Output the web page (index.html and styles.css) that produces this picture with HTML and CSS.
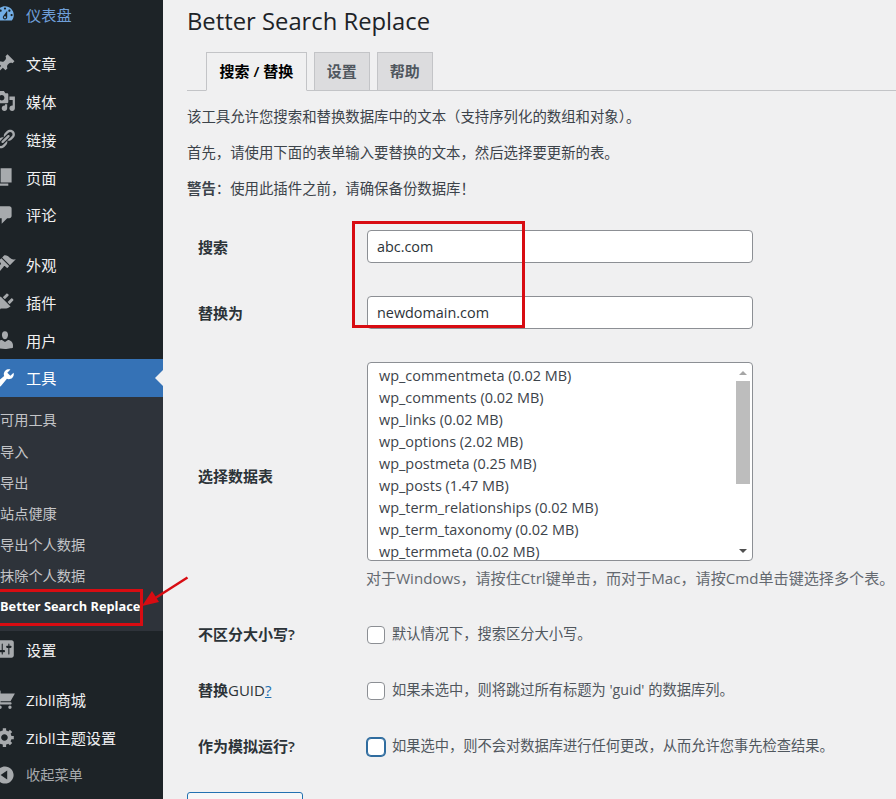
FILE: index.html
```html
<!DOCTYPE html>
<html lang="zh-CN">
<head>
<meta charset="utf-8">
<title>Better Search Replace</title>
<link rel="stylesheet" href="styles.css">
</head>
<body>
<div class="page">
  <nav class="sidebar">
    <ul class="menu">
      <li class="mi dash"><svg class="ic" viewBox="0 0 20 20"><path d="M3.76 16h12.48c1.1-1.37 1.76-3.11 1.76-5 0-4.42-3.58-8-8-8s-8 3.58-8 8c0 1.89.66 3.63 1.76 5zM10 4c.55 0 1 .45 1 1s-.45 1-1 1-1-.45-1-1 .45-1 1-1zM6 6c.55 0 1 .45 1 1s-.45 1-1 1-1-.45-1-1 .45-1 1-1zm8 0c.55 0 1 .45 1 1s-.45 1-1 1-1-.45-1-1 .45-1 1-1zm-5.37 5.55L12 7v6c0 1.1-.9 2-2 2s-2-.9-2-2c0-.57.24-1.08.63-1.45zM4 10c.55 0 1 .45 1 1s-.45 1-1 1-1-.45-1-1 .45-1 1-1zm12 0c.55 0 1 .45 1 1s-.45 1-1 1-1-.45-1-1 .45-1 1-1zm-5 3c0-.55-.45-1-1-1s-1 .45-1 1 .45 1 1 1 1-.45 1-1z"/></svg>仪表盘</li>
      <li class="mi sep"><svg class="ic" viewBox="0 0 20 20"><path d="M10.44 3.02l1.82-1.82 6.36 6.35-1.83 1.82c-1.05-.68-2.48-.57-3.41.36l-.75.75c-.92.93-1.04 2.35-.35 3.41l-1.83 1.82-2.41-2.41-2.8 2.79c-.42.42-3.38 2.71-3.8 2.29s1.86-3.39 2.28-3.81l2.79-2.79L4.1 9.36l1.83-1.82c1.05.69 2.48.57 3.4-.36l.75-.75c.93-.92 1.05-2.35.36-3.41z"/></svg>文章</li>
      <li class="mi"><svg class="ic" viewBox="0 0 20 20"><path d="M13 11V4c0-.55-.45-1-1-1h-1.67L9 1H5L3.67 3H2c-.55 0-1 .45-1 1v7c0 .55.45 1 1 1h10c.55 0 1-.45 1-1zM7 4.5c1.38 0 2.5 1.12 2.5 2.5S8.38 9.5 7 9.5 4.5 8.38 4.5 7 5.62 4.5 7 4.5zM14 6h5v10.5c0 1.38-1.12 2.5-2.5 2.5S14 17.88 14 16.5s1.12-2.5 2.5-2.5c.17 0 .34.02.5.05V9h-3V6zm-4 8.05V13h2v3.5c0 1.38-1.12 2.5-2.5 2.5S7 17.88 7 16.5 8.12 14 9.5 14c.17 0 .34.02.5.05z"/></svg>媒体</li>
      <li class="mi"><svg class="ic" viewBox="0 0 20 20"><path d="M17.74 2.76c1.68 1.69 1.68 4.41 0 6.1l-1.53 1.52c-1.12 1.12-2.7 1.47-4.14 1.09l2.62-2.61.76-.77.76-.76c.84-.84.84-2.2 0-3.04-.84-.85-2.2-.85-3.04 0l-.77.76-3.38 3.38c-.37-1.44-.02-3.02 1.1-4.14l1.52-1.53c1.69-1.68 4.42-1.68 6.1 0zM8.59 13.43l5.34-5.34c.42-.42.42-1.1 0-1.52-.44-.43-1.13-.39-1.53 0l-5.33 5.34c-.42.42-.42 1.1 0 1.52.44.43 1.13.39 1.52 0zm-.76 2.29l4.14-4.15c.38 1.44.03 3.02-1.09 4.14l-1.52 1.53c-1.69 1.68-4.41 1.68-6.1 0-1.68-1.68-1.68-4.42 0-6.1l1.53-1.52c1.12-1.12 2.7-1.47 4.14-1.1l-4.14 4.15c-.85.84-.85 2.2 0 3.05.84.84 2.2.84 3.04 0z"/></svg>链接</li>
      <li class="mi"><svg class="ic" viewBox="0 0 20 20"><path d="M6 15V2h10v13H6zm-1 1h8v2H3V5h2v11z"/></svg>页面</li>
      <li class="mi"><svg class="ic" viewBox="0 0 20 20"><path d="M5 2h9c1.1 0 2 .9 2 2v7c0 1.1-.9 2-2 2h-2l-5 5v-5H5c-1.1 0-2-.9-2-2V4c0-1.1.9-2 2-2z"/></svg>评论</li>
      <li class="mi sep"><svg class="ic" viewBox="0 0 20 20"><path d="M14.48 11.06L7.41 3.99l1.5-1.5c.5-.56 2.3-.47 3.51.32 1.21.8 1.43 1.28 2.91 2.1 1.18.64 2.45 1.26 4.45.85zm-.71.71L6.7 4.7 4.93 6.47c-.39.39-.39 1.02 0 1.41l1.06 1.06c.39.39.39 1.03 0 1.42-.6.6-1.43 1.11-2.21 1.69-.35.26-.7.53-1.01.84C1.43 13.23.77 15.04 2 16.2s2.97.53 4.31-.8c.3-.31.58-.66.85-1.01.58-.78 1.08-1.61 1.69-2.21.39-.39 1.02-.39 1.41 0l1.06 1.06c.39.39 1.02.39 1.41 0z"/></svg>外观</li>
      <li class="mi"><svg class="ic" viewBox="0 0 20 20"><path d="M13.11 4.36L9.87 7.6 8 5.73l3.24-3.24c.35-.34 1.05-.2 1.56.32.52.51.66 1.21.31 1.55zm-8 1.77l.91-1.12 9.01 9.01-1.19.84c-.71.71-2.63 1.16-3.82 1.16H6.14L4.9 17.26c-.59.59-1.54.59-2.12 0-.59-.58-.59-1.53 0-2.12l1.24-1.24v-3.88c0-1.13.4-3.19 1.09-3.89zm7.26 3.97l3.24-3.24c.34-.35 1.04-.21 1.55.31.52.51.66 1.21.31 1.55l-3.24 3.25z"/></svg>插件</li>
      <li class="mi"><svg class="ic" viewBox="0 0 20 20"><path d="M10 9.25c-2.27 0-2.73-3.44-2.73-3.44C7 4.02 7.82 2 9.97 2c2.16 0 2.98 2.02 2.71 3.81 0 0-.41 3.44-2.68 3.44zm0 2.57L12.720 10c2.390 0 4.520 2.330 4.520 4.530v2.490s-3.650 1.130-7.240 1.130c-3.650 0-7.240-1.130-7.240-1.130v-2.490c0-2.250 1.940-4.480 4.470-4.480z"/></svg>用户</li>
      <li class="mi active"><svg class="ic" viewBox="0 0 20 20"><path d="M16.68 9.77c-1.34 1.34-3.3 1.67-4.95.99l-5.41 6.52c-.99.99-2.59.99-3.58 0s-.99-2.59 0-3.57l6.52-5.42c-.68-1.65-.35-3.61.99-4.95 1.28-1.28 3.12-1.62 4.72-1.06l-2.89 2.89 2.82 2.82 2.86-2.87c.53 1.58.18 3.39-1.08 4.65zM3.81 16.21c.4.39 1.04.39 1.43 0 .4-.4.4-1.04 0-1.43-.39-.4-1.03-.4-1.43 0-.39.39-.39 1.03 0 1.43z"/></svg>工具</li>
      <li class="sub">
        <ul class="sublist">
          <li class="si">可用工具</li>
          <li class="si">导入</li>
          <li class="si">导出</li>
          <li class="si">站点健康</li>
          <li class="si">导出个人数据</li>
          <li class="si">抹除个人数据</li>
          <li class="si current">Better Search Replace</li>
        </ul>
      </li>
      <li class="mi"><svg class="ic" viewBox="0 0 20 20"><path d="M18 16V4c0-1.1-.9-2-2-2H4c-1.1 0-2 .9-2 2v12c0 1.1.9 2 2 2h12c1.1 0 2-.9 2-2zM8 11h1c.55 0 1 .45 1 1s-.45 1-1 1H8v1.500c0 .28-.22.5-.5.5s-.5-.22-.5-.5V13H6c-.55 0-1-.45-1-1s.45-1 1-1h1V5.500c0-.28.22-.5.5-.5s.5.22.5.5V11zm5-2h-1c-.55 0-1-.45-1-1s.45-1 1-1h1V5.500c0-.28.22-.5.5-.5s.5.22.5.5V7h1c.55 0 1 .45 1 1s-.45 1-1 1h-1v5.500c0 .28-.22.5-.5.5s-.5-.22-.5-.5V9z"/></svg>设置</li>
      <li class="mi sep"><svg class="ic" viewBox="0 0 20 20"><path d="M6 13h9c.55 0 1 .45 1 1s-.45 1-1 1H5c-.55 0-1-.45-1-1V4H2c-.55 0-1-.45-1-1s.45-1 1-1h3c.55 0 1 .45 1 1v2h13l-4 7H6v1zm-.5 3c.83 0 1.500.67 1.500 1.500S6.330 19 5.500 19 4 18.330 4 17.500 4.670 16 5.500 16zm9 0c.83 0 1.500.67 1.500 1.500s-.67 1.500-1.500 1.500-1.500-.67-1.500-1.500.67-1.500 1.500-1.500z"/></svg>Zibll商城</li>
      <li class="mi"><svg class="ic" viewBox="0 0 20 20"><path d="M18 12h-2.180c-.17.7-.44 1.350-.81 1.930l1.540 1.540-2.100 2.100-1.540-1.540c-.58.36-1.230.63-1.910.79V19H8v-2.180c-.68-.16-1.330-.43-1.910-.79l-1.540 1.540-2.120-2.120 1.540-1.540c-.36-.58-.63-1.230-.79-1.910H1V9.030h2.170c.16-.7.44-1.350.8-1.940L2.430 5.550l2.100-2.100 1.540 1.540c.58-.37 1.240-.64 1.930-.81V2h3v2.180c.68.16 1.330.43 1.910.79l1.540-1.540 2.120 2.120-1.540 1.540c.36.59.64 1.240.8 1.940H18V12zm-8.500 1.500c1.660 0 3-1.340 3-3s-1.340-3-3-3-3 1.340-3 3 1.340 3 3 3z"/></svg>Zibll主题设置</li>
      <li class="mi collapse"><svg class="ic" viewBox="0 0 20 20"><path d="M10 2.160c4.330 0 7.840 3.510 7.840 7.840s-3.510 7.840-7.840 7.840S2.160 14.330 2.160 10 5.670 2.160 10 2.160zm2 11.840V6l-6 4z"/></svg>收起菜单</li>
    </ul>
  </nav>

  <main class="content">
    <h1 class="title">Better Search Replace</h1>
    <div class="tabs">
      <a class="tab tab-active">搜索 / 替换</a>
      <a class="tab">设置</a>
      <a class="tab">帮助</a>
    </div>
    <p class="para">该工具允许您搜索和替换数据库中的文本（支持序列化的数组和对象）。</p>
    <p class="para">首先，请使用下面的表单输入要替换的文本，然后选择要更新的表。</p>
    <p class="para"><strong class="warn">警告</strong>：使用此插件之前，请确保备份数据库！</p>

    <form class="form">
      <label class="lbl lbl-input">搜索</label>
      <input class="field" type="text" value="abc.com">

      <label class="lbl lbl-input">替换为</label>
      <input class="field" type="text" value="newdomain.com">

      <label class="lbl">选择数据表</label>
      <div class="tables">
        <div class="listbox">
          <ul class="options">
            <li>wp_commentmeta (0.02 MB)</li>
            <li>wp_comments (0.02 MB)</li>
            <li>wp_links (0.02 MB)</li>
            <li>wp_options (2.02 MB)</li>
            <li>wp_postmeta (0.25 MB)</li>
            <li>wp_posts (1.47 MB)</li>
            <li>wp_term_relationships (0.02 MB)</li>
            <li>wp_term_taxonomy (0.02 MB)</li>
            <li>wp_termmeta (0.02 MB)</li>
          </ul>
          <div class="scrollbar">
            <span class="arrow-up"></span>
            <span class="thumb"></span>
            <span class="arrow-down"></span>
          </div>
        </div>
        <p class="hint">对于Windows，请按住Ctrl键单击，而对于Mac，请按Cmd单击键选择多个表。</p>
      </div>

      <label class="lbl lbl-check">不区分大小写?</label>
      <div class="check"><input class="cb" type="checkbox"><span class="check-text">默认情况下，搜索区分大小写。</span></div>

      <label class="lbl lbl-check">替换<span class="lbl-plain">GUID</span><a class="help">?</a></label>
      <div class="check"><input class="cb" type="checkbox"><span class="check-text">如果未选中，则将跳过所有标题为 'guid' 的数据库列。</span></div>

      <label class="lbl lbl-check">作为模拟运行?</label>
      <div class="check"><input class="cb cb-focus" type="checkbox"><span class="check-text">如果选中，则不会对数据库进行任何更改，从而允许您事先检查结果。</span></div>
    </form>
    <button class="submit" type="button" aria-label="运行搜索/替换"></button>
  </main>

  <div class="mark mark-fields"></div>
  <div class="mark mark-menu"></div>
  <svg class="pointer" viewBox="0 0 50 34"><path d="M46.500 2.500L12 24.500" fill="none" stroke="#d80c12" stroke-width="2.500"/><path d="M1 31l10-15 7 11z" fill="#d80c12"/></svg>
</div>
</body>
</html>
```

FILE: styles.css
```css
* { box-sizing: border-box; }
html, body { margin: 0; padding: 0; }
body {
  background: #f0f0f1;
  color: #3c434a;
  font-family: "Open Sans", "Noto Sans CJK SC", sans-serif;
  font-size: 14.4px;
  line-height: 20px;
}
ul { list-style: none; margin: 0; padding: 0; }

.page {
  position: relative;
  display: flex;
  width: 896px;
  height: 799px;
  overflow: hidden;
}

/* sidebar */
.sidebar {
  flex: 0 0 163px;
  background: #1d2327;
  color: #f0f0f1;
  overflow: hidden;
}
.menu { margin-top: -5px; }
.mi {
  position: relative;
  display: flex;
  align-items: center;
  gap: 10px;
  height: 37.75px;
  padding-top: 1.5px;
  font-size: 15.2px;
  white-space: nowrap;
}
.sep { margin-top: 12px; }
.ic {
  flex: 0 0 22px;
  width: 22px;
  height: 22px;
  margin-left: -6px;
  margin-top: -1.5px;
  fill: #a7aaad;
}
.dash { color: #6f9fd8; }
.dash .ic { fill: #72aee6; }
.active { background: #3572b6; color: #fff; }
.active .ic { fill: #fff; }
.active::after {
  content: "";
  position: absolute;
  right: 0;
  top: 11px;
  border: 8px solid transparent;
  border-left-width: 0;
  border-right-color: #f0f0f1;
}
.collapse { color: #a7aaad; font-size: 14.2px; }
.sub { background: #2e333a; padding: 7px 0 9px; }
.si {
  height: 31px;
  line-height: 31px;
  font-size: 14.2px;
  color: #c3c4c7;
  white-space: nowrap;
}
.si:first-child { height: 32px; }
.current { color: #fff; font-weight: 700; font-size: 12.8px; }

/* content */
.content {
  flex: 1 1 auto;
  min-width: 0;
  padding: 5px 0 0 24px;
}
.title {
  margin: 0;
  font-size: 23.8px;
  font-weight: 400;
  line-height: 32px;
  color: #1d2327;
}
.tabs {
  display: flex;
  gap: 7px;
  margin-top: 15px;
  padding-left: 19px;
  height: 39px;
  border-bottom: 1px solid #c3c4c7;
}
.tab {
  height: 39px;
  padding: 0 12px;
  border: 1px solid #c3c4c7;
  background: #dcdcde;
  color: #50575e;
  font-weight: 600;
  font-size: 15px;
  line-height: 37px;
}
.tab-active {
  padding: 0 12.5px;
  background: #f0f0f1;
  border-bottom-color: #f0f0f1;
  color: #000;
}
.para { margin: 16px 0; }
.warn { font-weight: 600; }

.form {
  display: grid;
  grid-template-columns: 169px 530px;
  grid-template-rows: 33px 33px 228px 23px 23px 23px;
  row-gap: 33px;
  margin-top: 31px;
  padding-left: 11px;
}
.lbl {
  display: flex;
  align-items: center;
  font-size: 15px;
  font-weight: 600;
  color: #2c3338;
}
.lbl-input { padding-top: 1px; }
.lbl-check { padding-bottom: 2px; }
.lbl-plain { font-weight: 500; }
.help { color: #2271b1; font-weight: 400; text-decoration: underline; }
.field {
  width: 386px;
  height: 33px;
  padding: 0 9px;
  border: 1px solid #8c8f94;
  border-radius: 4px;
  background: #fff;
  color: #2c3338;
  font: inherit;
}
.listbox {
  display: flex;
  width: 386px;
  height: 199px;
  border: 1px solid #8c8f94;
  border-radius: 4px;
  background: #fff;
  overflow: hidden;
}
.options {
  flex: 1 1 auto;
  padding: 2px 0 0 11px;
  font-size: 14.45px;
  line-height: 22px;
  color: #3c434a;
}
.scrollbar {
  flex: 0 0 17px;
  display: flex;
  flex-direction: column;
  align-items: center;
  padding: 0 2px 0 0;
}
.arrow-up {
  margin: 8px 0 6px;
  border: 4px solid transparent;
  border-top-width: 0;
  border-left-width: 4px;
  border-bottom-color: #a6a6a6;
  border-bottom-width: 4px;
}
.thumb {
  width: 14px;
  height: 103px;
  background: #bdbdbd;
}
.arrow-down {
  margin: auto 0 7px;
  border: 4px solid transparent;
  border-bottom-width: 0;
  border-top-color: #505050;
}
.hint {
  margin: 7px 0 0 -1px;
  font-size: 15.1px;
  white-space: nowrap;
  color: #646970;
}
.check {
  display: flex;
  align-items: center;
  gap: 7px;
  white-space: nowrap;
  font-size: 14.25px;
  color: #50575e;
}
.check-text { padding-bottom: 2px; }
.cb {
  appearance: none;
  -webkit-appearance: none;
  flex: 0 0 18px;
  width: 18px;
  height: 18px;
  margin: 0;
  border: 1px solid #8c8f94;
  border-radius: 4px;
  background: #fff;
}
.cb-focus {
  border-color: #2f6c9f;
  box-shadow: 0 0 0 1px #2f6c9f;
}
.submit {
  display: block;
  width: 116px;
  height: 36px;
  margin-top: 34px;
  border: 1px solid #2271b1;
  border-radius: 3px;
  background: #f6f7f7;
  color: #2271b1;
  font: inherit;
}

/* annotations drawn over the screenshot */
.mark {
  position: absolute;
  border: 3px solid #d80c12;
}
.mark-fields { left: 352px; top: 221px; width: 173px; height: 107px; }
.mark-menu { left: -4px; top: 589px; width: 147px; height: 37px; }
.pointer {
  position: absolute;
  left: 141px;
  top: 575px;
  width: 50px;
  height: 34px;
}
```
